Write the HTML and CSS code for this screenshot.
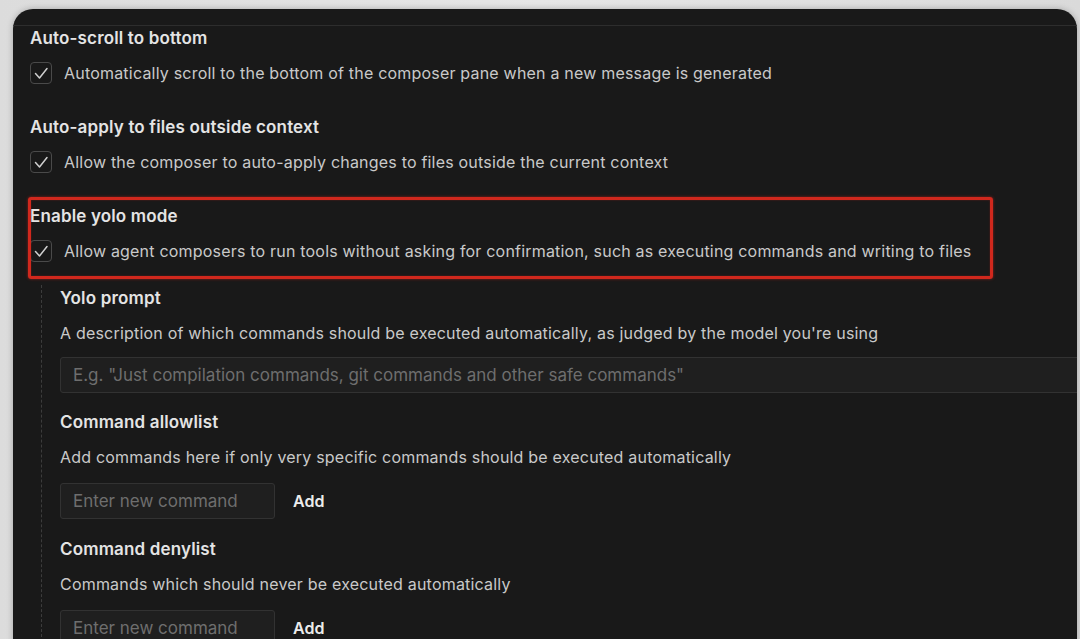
FILE: index.html
```html
<!DOCTYPE html>
<html lang="en">
<head>
<meta charset="utf-8">
<title>Settings</title>
<link rel="stylesheet" href="styles.css">
</head>
<body>
<div class="panel">
  <div class="topbar"></div>
  <div class="content">
    <div class="section">
      <div class="heading">Auto-scroll to bottom</div>
      <div class="row">
        <span class="checkbox"><svg viewBox="0 0 22 22" width="22" height="22"><path d="M5.5 11.5 L9.5 16 L17 6.5" fill="none" stroke="#cfcfcf" stroke-width="1.5" stroke-linecap="round" stroke-linejoin="round"/></svg></span>
        <span class="desc">Automatically scroll to the bottom of the composer pane when a new message is generated</span>
      </div>
    </div>
    <div class="section">
      <div class="heading">Auto-apply to files outside context</div>
      <div class="row">
        <span class="checkbox"><svg viewBox="0 0 22 22" width="22" height="22"><path d="M5.5 11.5 L9.5 16 L17 6.5" fill="none" stroke="#cfcfcf" stroke-width="1.5" stroke-linecap="round" stroke-linejoin="round"/></svg></span>
        <span class="desc">Allow the composer to auto-apply changes to files outside the current context</span>
      </div>
    </div>
    <div class="section yolo">
      <div class="heading">Enable yolo mode</div>
      <div class="row">
        <span class="checkbox"><svg viewBox="0 0 22 22" width="22" height="22"><path d="M5.5 11.5 L9.5 16 L17 6.5" fill="none" stroke="#cfcfcf" stroke-width="1.5" stroke-linecap="round" stroke-linejoin="round"/></svg></span>
        <span class="desc">Allow agent composers to run tools without asking for confirmation, such as executing commands and writing to files</span>
      </div>
      <div class="highlight"></div>
    </div>
    <div class="nested">
      <div class="heading">Yolo prompt</div>
      <div class="desc sub">A description of which commands should be executed automatically, as judged by the model you're using</div>
      <div class="input wide">E.g. "Just compilation commands, git commands and other safe commands"</div>

      <div class="heading gap">Command allowlist</div>
      <div class="desc sub">Add commands here if only very specific commands should be executed automatically</div>
      <div class="inline">
        <div class="input small">Enter new command</div>
        <span class="add">Add</span>
      </div>

      <div class="heading gap">Command denylist</div>
      <div class="desc sub">Commands which should never be executed automatically</div>
      <div class="inline">
        <div class="input small">Enter new command</div>
        <span class="add">Add</span>
      </div>
    </div>
  </div>
</div>
</body>
</html>
```

FILE: styles.css
```css
html, body {
  margin: 0;
  padding: 0;
  height: 100%;
  overflow: hidden;
}
body {
  background: linear-gradient(90deg, #dcdcdc 0%, #e6e6e6 50%, #dadada 100%);
  font-family: Inter, "Noto Sans", "Liberation Sans", sans-serif;
}
.panel {
  margin: 9px 3px 0 13px;
  height: 700px;
  background: #191919;
  border-radius: 20px 20px 0 0;
  overflow: hidden;
  box-shadow: 0 0 6px rgba(0,0,0,0.25);
}
.topbar {
  height: 16px;
  border-bottom: 1px solid #2d2d2d;
}
.content {
  padding: 1px 0 0 17px;
}
.section {
  position: relative;
  margin-bottom: 32px;
}
.section.yolo {
  margin-bottom: 23px;
}
.heading {
  font-size: 17px;
  font-weight: 600;
  line-height: 22px;
  letter-spacing: 0.15px;
  color: #e4e4e4;
}
.row {
  display: flex;
  align-items: center;
  gap: 12px;
  margin-top: 13px;
  height: 22px;
}
.checkbox {
  width: 22px;
  height: 22px;
  box-sizing: border-box;
  border: 1.5px solid #4a4a4a;
  border-radius: 4px;
  display: flex;
  align-items: center;
  justify-content: center;
  flex: none;
}
.checkbox svg {
  display: block;
  margin: -1.5px;
}
.desc {
  font-size: 16px;
  line-height: 22px;
  letter-spacing: 0.2px;
  color: #c9c9c9;
}
.highlight {
  position: absolute;
  left: -2px;
  top: -8px;
  width: 965px;
  height: 82px;
  box-sizing: border-box;
  border: 3px solid #d0281d;
  border-radius: 3px;
  box-shadow: 0 0 3px rgba(220, 40, 30, 0.6), inset 0 0 2px rgba(220,40,30,0.4);
  pointer-events: none;
}
.nested {
  margin-left: 11px;
  border-left: 1px dashed #3c3c3c;
  padding: 2px 0 0 18px;
  display: flex;
  flex-direction: column;
  align-items: flex-start;
}
.desc.sub {
  margin-top: 13px;
}
.heading.gap {
  margin-top: 18px;
}
.input {
  margin-top: 13px;
  height: 36px;
  box-sizing: border-box;
  border: 1px solid #323232;
  border-radius: 3px;
  background: #1f1f1f;
  color: #6e6e6e;
  font-size: 17px;
  line-height: 34px;
  padding: 0 12px;
  white-space: nowrap;
}
.input.wide {
  width: 1060px;
}
.input.small {
  width: 215px;
  margin-top: 0;
}
.inline {
  display: flex;
  align-items: center;
  gap: 18px;
  margin-top: 15px;
  margin-bottom: 1px;
}
.add {
  font-size: 16px;
  font-weight: 600;
  color: #ececec;
}
```
